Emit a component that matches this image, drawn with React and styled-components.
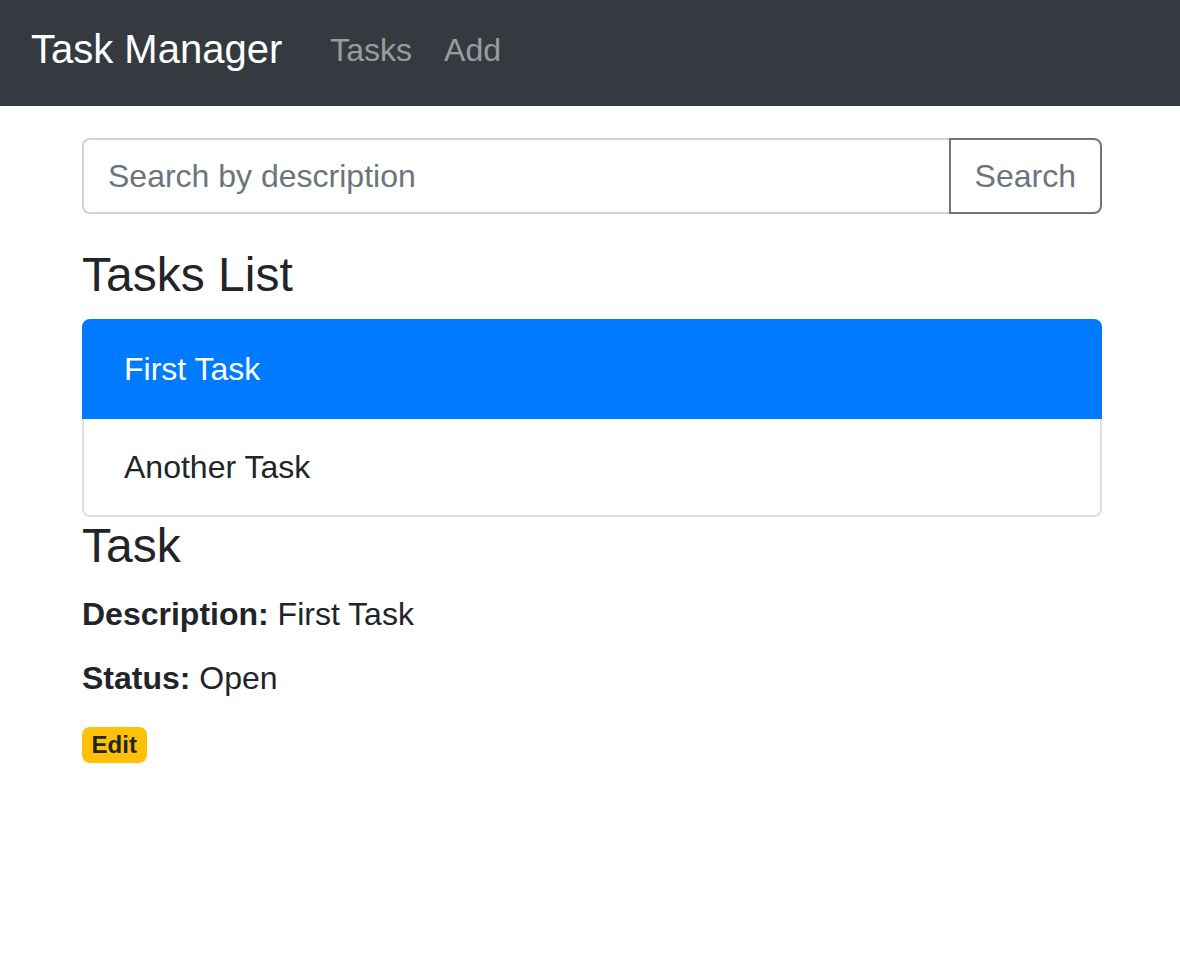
import React, { useState } from "react";
import styled, { createGlobalStyle } from "styled-components";

const GlobalStyle = createGlobalStyle`
  * { box-sizing: border-box; }
  body {
    margin: 0;
    font-family: "Liberation Sans", Arial, sans-serif;
    font-size: 32px;
    line-height: 1.5;
    color: #212529;
    background: #fff;
  }
`;

const Navbar = styled.nav`
  display: flex;
  align-items: flex-start;
  height: 106px;
  padding: 19px 32px 0 31px;
  background-color: #343a40;
`;

const Brand = styled.a`
  font-size: 40px;
  line-height: 60px;
  color: #fff;
  margin-right: 32px;
  text-decoration: none;
  white-space: nowrap;
`;

const NavList = styled.ul`
  display: flex;
  list-style: none;
  margin: 0;
  padding: 0;
`;

const NavLink = styled.a`
  display: block;
  padding: 7px 16px 16px;
  line-height: 48px;
  color: rgba(255, 255, 255, 0.5);
  text-decoration: none;
`;

const Container = styled.div`
  width: 1020px;
  margin: 32px 0 0 82px;
`;

const InputGroup = styled.div`
  display: flex;
  margin-bottom: 32px;
`;

const SearchInput = styled.input`
  flex: 1;
  height: 76px;
  padding: 12px 24px;
  font-family: inherit;
  font-size: 32px;
  line-height: 48px;
  color: #495057;
  border: 2px solid #ced4da;
  border-right: none;
  border-radius: 8px 0 0 8px;
  outline: none;

  &::placeholder {
    color: #6c757d;
  }
`;

const OutlineButton = styled.button`
  height: 76px;
  padding: 12px 24px;
  font-family: inherit;
  font-size: 32px;
  line-height: 48px;
  color: #6c757d;
  background: transparent;
  border: 2px solid #6c757d;
  border-radius: 0 8px 8px 0;
  cursor: pointer;
`;

const Heading = styled.h4`
  margin: 0 0 16px;
  font-size: 48px;
  font-weight: 500;
  line-height: 57px;
`;

const ListGroup = styled.ul`
  list-style: none;
  margin: 0;
  padding: 0;
  border-radius: 8px;
`;

const ListItem = styled.li`
  padding: 24px 40px;
  line-height: 48px;
  border: 2px solid ${({ $active }) => ($active ? "#007bff" : "#dfdfdf")};
  background: ${({ $active }) => ($active ? "#007bff" : "#fff")};
  color: ${({ $active }) => ($active ? "#fff" : "#212529")};
  cursor: pointer;

  & + & {
    border-top-width: 0;
  }
  &:first-child {
    border-radius: 8px 8px 0 0;
  }
  &:last-child {
    border-radius: 0 0 8px 8px;
  }
`;

const Details = styled.div`
  line-height: 48px;
`;

const Field = styled.div`
  label {
    display: inline-block;
    margin-bottom: 16px;
  }
`;

const Badge = styled.a`
  display: inline-block;
  padding: 6px 9.6px;
  font-size: 24px;
  font-weight: 700;
  line-height: 1;
  color: #212529;
  background-color: #ffc107;
  border-radius: 8px;
  text-decoration: none;
  vertical-align: baseline;
`;

const tasks = [
  { id: 1, description: "First Task", status: "Open" },
  { id: 2, description: "Another Task", status: "Open" },
];

export default function App() {
  const [current, setCurrent] = useState(0);
  const task = tasks[current];

  return (
    <>
      <GlobalStyle />
      <Navbar>
        <Brand href="#">Task Manager</Brand>
        <NavList>
          <li><NavLink href="#">Tasks</NavLink></li>
          <li><NavLink href="#">Add</NavLink></li>
        </NavList>
      </Navbar>
      <Container>
        <InputGroup>
          <SearchInput placeholder="Search by description" />
          <OutlineButton type="button">Search</OutlineButton>
        </InputGroup>
        <Heading>Tasks List</Heading>
        <ListGroup>
          {tasks.map((t, i) => (
            <ListItem key={t.id} $active={i === current} onClick={() => setCurrent(i)}>
              {t.description}
            </ListItem>
          ))}
        </ListGroup>
        <Details>
          <Heading>Task</Heading>
          <Field>
            <label><strong>Description:</strong></label> {task.description}
          </Field>
          <Field>
            <label><strong>Status:</strong></label> {task.status}
          </Field>
          <Badge href="#">Edit</Badge>
        </Details>
      </Container>
    </>
  );
}
